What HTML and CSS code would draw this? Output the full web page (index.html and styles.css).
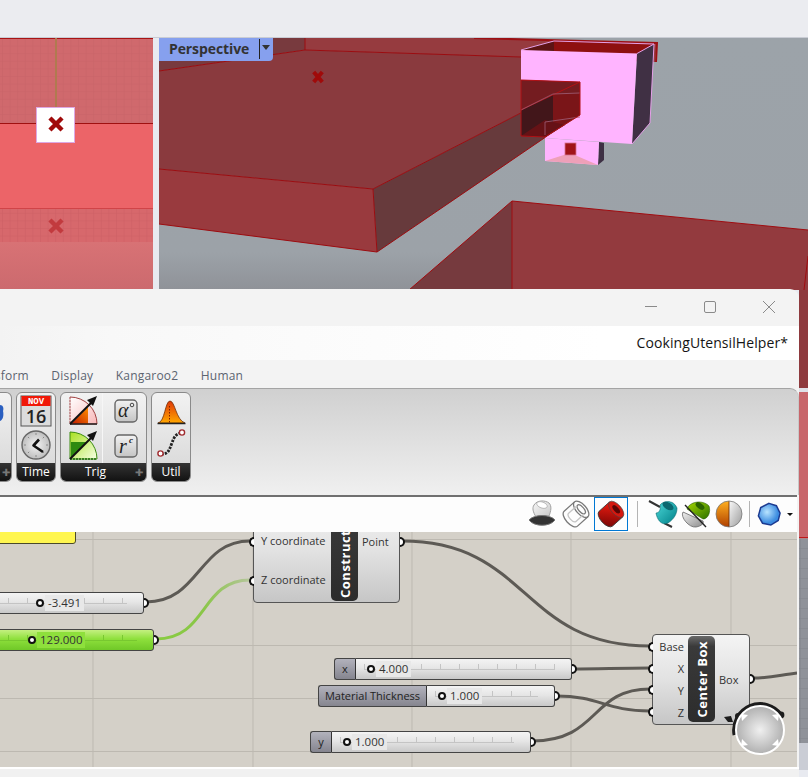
FILE: index.html
```html
<!DOCTYPE html>
<html lang="en">
<head>
<meta charset="utf-8">
<title>CookingUtensilHelper</title>
<link rel="stylesheet" href="styles.css">
</head>
<body>
<div class="desktop">
  <div class="topbar"></div>
  <div class="viewports">
    <div class="vp-left">
      <svg class="vp-svg" viewBox="0 38 153 739" width="153" height="739">
        <defs>
          <pattern id="gridA" width="7.6" height="7.6" patternUnits="userSpaceOnUse" x="2" y="38">
            <rect width="7.6" height="7.6" fill="#d0696d"/>
            <path d="M0 0H7.6M0 0V7.6" stroke="#c86368" stroke-width="1"/>
          </pattern>
          <pattern id="gridB" width="7.6" height="7.6" patternUnits="userSpaceOnUse" x="2" y="38">
            <rect width="7.6" height="7.6" fill="#d7686c"/>
            <path d="M0 0H7.6M0 0V7.6" stroke="#cd5f64" stroke-width="1"/>
          </pattern>
          <linearGradient id="fadeL" x1="0" y1="0" x2="0" y2="1">
            <stop offset="0" stop-color="#d87275"/>
            <stop offset="1" stop-color="#cc6a6e"/>
          </linearGradient>
        </defs>
        <rect x="0" y="38" width="153" height="85" fill="url(#gridA)"/>
        <rect x="0" y="123" width="153" height="85" fill="#ec6468"/>
        <rect x="0" y="208" width="153" height="34" fill="url(#gridB)"/>
        <rect x="0" y="242" width="153" height="47" fill="url(#fadeL)"/>
        <path d="M0 38.5H153" stroke="#a81414" stroke-width="1"/>
        <path d="M56 38V107" stroke="#b07a50" stroke-width="2"/>
        <path d="M0 123.5H153" stroke="#a01010" stroke-width="1"/>
        <path d="M0 208.5H153" stroke="#d04448" stroke-width="1"/>
        <rect x="36.5" y="107.5" width="38" height="35" fill="#fff" stroke="#dca8e4" stroke-width="1"/>
        <path d="M51.5 119.5L60.5 128.5M60.5 119.5L51.5 128.5" stroke="#a00a0a" stroke-width="4.4" stroke-linecap="square" fill="none"/>
        <path d="M51.5 221.5L60.5 230.5M60.5 221.5L51.5 230.5" stroke="#c23a3e" stroke-width="4.4" stroke-linecap="square" fill="none"/>
      </svg>
    </div>
    <div class="vp-right">
      <svg class="vp-svg" viewBox="159 38 649 739" width="649" height="739">
        <defs>
          <linearGradient id="floor" x1="0" y1="0" x2="0" y2="1">
            <stop offset="0" stop-color="#9ca3a9"/>
            <stop offset="0.85" stop-color="#9ca2a8"/>
            <stop offset="1" stop-color="#8f9298"/>
          </linearGradient>
          <pattern id="gridC" width="10" height="10" patternUnits="userSpaceOnUse" x="800" y="538">
            <rect width="10" height="10" fill="#8f9299"/>
            <path d="M0 0H10M0 0V10" stroke="#82858c" stroke-width="1"/>
          </pattern>
        </defs>
        <rect x="159" y="38" width="649" height="252" fill="url(#floor)"/>
        <polygon points="159,38 305,38 305,50 159,71" fill="#783a3e"/>
        <polygon points="305,38 474,38 657,43 655,62 521,57 305,50" fill="#963b3f"/>
        <polygon points="159,71 305,50 560,58 581,82 373,189 159,169" fill="#8a3a3e"/>
        <polygon points="159,169 373,189 377,252 159,224" fill="#993a3e"/>
        <polygon points="373,189 581,82 581,113 377,252" fill="#673a3c"/>
        <path d="M159 71L305 50L521 57M305 38V50M159 169L373 189L377 252L159 224M373 189L581 82M377 252L581 113" fill="none" stroke="#9c0c10" stroke-width="1"/>
        <path d="M474 38L657 43L656 62" fill="none" stroke="#9c1014" stroke-width="2"/>
        <polygon points="512,201 808,230 808,290 512,290" fill="#933a3e"/>
        <polygon points="512,201 512,290 409,290" fill="#763a3e"/>
        <path d="M409 290L512 201L808 230M512 201V290M808 256L804 290" fill="none" stroke="#a00c10" stroke-width="1"/>

        <polygon points="521,50 554,41 554,52" fill="#5c1414"/>
        <polygon points="554,41 654,44 637,53.5 554,52" fill="#8e1010"/>
        <polygon points="637,53.5 654,44 650,123 632,144" fill="#403044"/>
        <polygon points="521,50 637,53.5 632,144 545,138 580,115 580,82 521,80" fill="#ffb4ff"/>
        <path d="M521 50L554 41L654 44L637 53.5M654 44L650 123L632 144" fill="none" stroke="#e4a0e8" stroke-width="1"/>
        <polygon points="521,80 580,82 580,115 545,137 521,136" fill="#741c20"/>
        <polygon points="521,110 553,94 553,130 545,137 521,136" fill="#42161a"/>
        <polygon points="553,94 580,93 580,115 553,130" fill="#7a1518"/>
        <polygon points="521,136 545,137 565,125 545,120" fill="#661216"/>
        <path d="M521 110L580 82" stroke="#b41014" stroke-width="1"/>
        <path d="M521 110L553 94L580 93M545 122L580 117M545 122V135" fill="none" stroke="#a06078" stroke-width="0.8"/>
        <path d="M521 80L580 82L580 115L545 137L521 136Z" fill="none" stroke="#b01014" stroke-width="1"/>

        <polygon points="599,142 604,143 604,160 598,165" fill="#3e3044"/>
        <polygon points="545,138 599,142 598,165 545,161" fill="#ffb4ff"/>
        <path d="M570 153L545 161L598 165Z" fill="#eea0b8"/>
        <rect x="565" y="143" width="11" height="12" fill="#a01418" stroke="#d87090" stroke-width="0.8"/>
        <path d="M315 73.5L321 80.5M321 73.5L315 80.5" stroke="#a00a0a" stroke-width="4" stroke-linecap="square" fill="none"/>

        <rect x="799" y="290" width="9" height="98" fill="#8e3a3e"/>
        <rect x="799" y="388" width="9" height="4" fill="#dfe1e8"/>
        <rect x="799" y="392" width="9" height="145" fill="#c8666b"/>
        <rect x="799" y="537" width="9" height="1.5" fill="#c01818"/>
        <rect x="799" y="538.5" width="9" height="205" fill="url(#gridC)"/>
        <rect x="799" y="743" width="9" height="27" fill="#cacdd5"/>
      </svg>
      <div class="persp-tab">
        <span class="persp-label">Perspective</span>
        <span class="persp-sep"></span>
        <span class="persp-arrow"></span>
      </div>
    </div>
  </div>

  <div class="window">
    <div class="titlebar">
      <svg class="winbtn" width="14" height="14" viewBox="0 0 14 14"><path d="M1 6.5H13" stroke="#8a8a8a" stroke-width="1"/></svg>
      <svg class="winbtn" width="14" height="14" viewBox="0 0 14 14"><rect x="1.5" y="1.5" width="11" height="11" rx="1.5" fill="none" stroke="#8a8a8a" stroke-width="1"/></svg>
      <svg class="winbtn" width="14" height="14" viewBox="0 0 14 14"><path d="M1 1L13 13M13 1L1 13" stroke="#8a8a8a" stroke-width="1"/></svg>
    </div>
    <div class="docrow">CookingUtensilHelper*</div>
    <div class="menurow">
      <span class="menu-item menu-clipped">Transform</span>
      <span class="menu-item">Display</span>
      <span class="menu-item">Kangaroo2</span>
      <span class="menu-item">Human</span>
    </div>

    <div class="ribbon">
      <div class="group group-cut">
        <div class="group-body">
          <svg class="cut-icon" width="4" height="20" viewBox="0 0 4 20"><path d="M0 2C3 2 4 5 3 8C4 12 3 17 0 18Z" fill="#2a5fc0"/></svg>
        </div>
        <div class="group-foot"><span class="foot-plus">✚</span></div>
      </div>
      <div class="group group-time">
        <div class="group-body col">
          <svg width="32" height="32" viewBox="0 0 32 32">
            <rect x="1" y="1" width="30" height="30" fill="#dcdcdc" stroke="#555" stroke-width="1"/>
            <rect x="1.5" y="1" width="29" height="10" fill="#f01808"/>
            <text x="16" y="9" class="cal-month">NOV</text>
            <text x="16" y="28" class="cal-day">16</text>
          </svg>
          <svg width="32" height="32" viewBox="0 0 32 32">
            <defs><radialGradient id="clk"><stop offset="0" stop-color="#f4f4f4"/><stop offset="1" stop-color="#bdbdbd"/></radialGradient></defs>
            <circle cx="16" cy="16" r="14" fill="url(#clk)" stroke="#666" stroke-width="1.4"/>
            <path d="M16 4V6M16 26V28M4 16H6M26 16H28M8 8L9.2 9.2M24 8L22.8 9.2M8 24L9.2 22.8M24 24L22.8 22.8" stroke="#888" stroke-width="1"/>
            <path d="M19 10.5L13.5 16.5L23 23" fill="none" stroke="#111" stroke-width="2.6" stroke-linejoin="round"/>
          </svg>
        </div>
        <div class="group-foot">Time</div>
      </div>
      <div class="group group-trig">
        <div class="group-body trig-grid">
          <svg width="30" height="32" viewBox="0 0 30 32">
            <defs>
              <linearGradient id="pinkS" x1="0" y1="0" x2="1" y2="1"><stop offset="0" stop-color="#fff"/><stop offset="1" stop-color="#f8b8b8"/></linearGradient>
              <linearGradient id="orT" x1="0" y1="1" x2="1" y2="0"><stop offset="0" stop-color="#c01800"/><stop offset="1" stop-color="#ff9000"/></linearGradient>
            </defs>
            <path d="M2 29V2A27 27 0 0 1 29 29Z" fill="url(#pinkS)" stroke="#a04040" stroke-width="1"/>
            <path d="M2 29V2" stroke="#fff" stroke-dasharray="1 2" stroke-width="1"/>
            <path d="M3 29L20 12V29Z" fill="url(#orT)"/>
            <path d="M2 29H29" stroke="#222" stroke-width="1.4"/>
            <path d="M2 29L24 7" stroke="#111" stroke-width="2"/>
            <path d="M29 1L19 5L25 11Z" fill="#111"/>
          </svg>
          <svg width="24" height="24" viewBox="0 0 24 24">
            <defs><linearGradient id="btn" x1="0" y1="0" x2="0" y2="1"><stop offset="0" stop-color="#f2f2f2"/><stop offset="1" stop-color="#c4c4c4"/></linearGradient></defs>
            <rect x="1" y="1" width="22" height="22" rx="4" fill="url(#btn)" stroke="#666" stroke-width="1.4"/>
            <text x="4" y="17.5" class="math-big">α</text>
            <circle cx="18" cy="6" r="1.8" fill="none" stroke="#333" stroke-width="0.9"/>
          </svg>
          <svg width="30" height="32" viewBox="0 0 30 32">
            <defs>
              <linearGradient id="grS" x1="0" y1="0" x2="1" y2="1"><stop offset="0" stop-color="#a8e020"/><stop offset="1" stop-color="#f6ffe4"/></linearGradient>
            </defs>
            <path d="M2 29V2A27 27 0 0 1 29 29Z" fill="url(#grS)" stroke="#3c8c10" stroke-width="1"/>
            <path d="M3 12H19L3 28Z" fill="#2e8a10"/>
            <path d="M2 29H29" stroke="#1c6a08" stroke-dasharray="2 1" stroke-width="1.4"/>
            <path d="M2 29L24 7" stroke="#111" stroke-width="2"/>
            <path d="M29 1L19 5L25 11Z" fill="#111"/>
          </svg>
          <svg width="24" height="24" viewBox="0 0 24 24">
            <rect x="1" y="1" width="22" height="22" rx="4" fill="url(#btn)" stroke="#666" stroke-width="1.4"/>
            <text x="5" y="18.5" class="math-big">r</text>
            <text x="15" y="9" class="math-small">c</text>
          </svg>
        </div>
        <div class="group-foot foot-trig">Trig<span class="foot-plus foot-right">✚</span></div>
      </div>
      <div class="group group-util">
        <div class="group-body col">
          <svg width="30" height="28" viewBox="0 0 30 28">
            <defs><linearGradient id="dist" x1="0" y1="0" x2="0" y2="1"><stop offset="0" stop-color="#e03808"/><stop offset="1" stop-color="#ffa800"/></linearGradient></defs>
            <path d="M2 25C9 24 9 3 14 3C19 3 20 22 29 25Z" fill="url(#dist)" stroke="#703008" stroke-width="0.8"/>
            <path d="M1.5 25.5H29.5" stroke="#222" stroke-width="1.4"/>
            <path d="M13.5 8V25" stroke="#802000" stroke-dasharray="1.5 1.5"/>
          </svg>
          <svg width="30" height="30" viewBox="0 0 30 30">
            <path d="M5 26C13 26 13 22 16 15C18 9 20 6 25 5" fill="none" stroke="#222" stroke-width="2.8" stroke-dasharray="2.4 1.2"/>
            <circle cx="4.5" cy="25.5" r="2.6" fill="#fff" stroke="#a02c30" stroke-width="1.4"/>
            <circle cx="26" cy="4.5" r="2.6" fill="#fff" stroke="#a02c30" stroke-width="1.4"/>
          </svg>
        </div>
        <div class="group-foot">Util</div>
      </div>
    </div>

    <div class="toolbar">
      <svg class="t-ghost" width="30" height="30" viewBox="0 0 30 30">
        <defs>
          <linearGradient id="ghost" x1="0" y1="0" x2="1" y2="1"><stop offset="0" stop-color="#f8f8f8"/><stop offset="1" stop-color="#c8c8c8"/></linearGradient>
        </defs>
        <path d="M7 6C10 1 18 1 22 4C25 7 24 12 22 17L9 18C6 13 5 9 7 6Z" fill="url(#ghost)" stroke="#a0a0a0" stroke-width="1"/>
        <ellipse cx="15" cy="6" rx="5.5" ry="3" fill="#fff" stroke="#b0b0b0" stroke-width="0.8" transform="rotate(20 15 6)"/>
        <path d="M2 21C7 15 23 15 28 21C23 28 7 28 2 21Z" fill="#333" stroke="#777" stroke-width="1"/>
      </svg>
      <svg class="t-wire" width="30" height="30" viewBox="0 0 30 30">
        <g transform="rotate(48 15 15)" fill="none" stroke="#7a7a7a" stroke-width="1.3">
          <path d="M5 8V22A10 5 0 0 0 25 22V8"/>
          <ellipse cx="15" cy="8" rx="10" ry="5"/>
          <ellipse cx="15" cy="8" rx="5.5" ry="2.6"/>
          <path d="M9.5 9V20A5.5 2.6 0 0 0 20.5 20V9" stroke="#c4c4c4"/>
        </g>
      </svg>
      <div class="tool-selected">
        <svg width="30" height="30" viewBox="0 0 30 30">
          <defs>
            <linearGradient id="red" x1="0" y1="0" x2="1" y2="1"><stop offset="0" stop-color="#ee1c10"/><stop offset="1" stop-color="#700404"/></linearGradient>
          </defs>
          <g transform="rotate(48 15 15)">
            <path d="M5 8V22A10 5 0 0 0 25 22V8Z" fill="url(#red)" stroke="#333" stroke-width="0.8"/>
            <ellipse cx="15" cy="8" rx="10" ry="5" fill="#d41810" stroke="#444" stroke-width="0.6"/>
            <ellipse cx="15" cy="8" rx="5" ry="2.4" fill="#5a0606"/>
          </g>
        </svg>
      </div>
      <span class="tool-sep sep-a"></span>
      <svg class="t-teal" width="32" height="30" viewBox="0 0 32 30">
        <defs><linearGradient id="teal" x1="0" y1="0" x2="1" y2="1"><stop offset="0" stop-color="#4cd8d8"/><stop offset="1" stop-color="#008088"/></linearGradient></defs>
        <path d="M3 2L14 8M18 24L26 28" stroke="#333" stroke-width="2"/>
        <path d="M14 6C18 1 28 1 31 9C31 15 28 20 22 24C15 27 11 20 10 14C14 14 15 9 14 6Z" fill="url(#teal)" stroke="#0c6a70" stroke-width="0.6"/>
        <ellipse cx="22" cy="7" rx="6" ry="3.4" fill="#0a6870" transform="rotate(30 22 7)"/>
      </svg>
      <svg class="t-green" width="30" height="30" viewBox="0 0 30 30">
        <defs>
          <linearGradient id="grn" x1="0" y1="0" x2="1" y2="1"><stop offset="0" stop-color="#a4d800"/><stop offset="1" stop-color="#2c7000"/></linearGradient>
          <linearGradient id="wht" x1="0" y1="0" x2="1" y2="1"><stop offset="0" stop-color="#f0f0f0"/><stop offset="1" stop-color="#8c8c8c"/></linearGradient>
        </defs>
        <path d="M2 13C-1 18 8 29 15 28C21 27 23 24 22 22Z" fill="url(#wht)" stroke="#666" stroke-width="0.8"/>
        <path d="M6 10C8 3 21 0 28 7C30 13 27 20 22 20Z" fill="url(#grn)" stroke="#2a6000" stroke-width="0.6"/>
        <ellipse cx="19" cy="7" rx="5" ry="2.8" fill="#2c6400" transform="rotate(35 19 7)"/>
        <path d="M4 6L25 28" stroke="#222" stroke-width="1.4"/>
      </svg>
      <svg class="t-sphere" width="28" height="28" viewBox="0 0 28 28">
        <defs>
          <linearGradient id="orng" x1="0" y1="0" x2="0" y2="1"><stop offset="0" stop-color="#ffb020"/><stop offset="1" stop-color="#b04000"/></linearGradient>
          <linearGradient id="ws" x1="0" y1="0" x2="1" y2="1"><stop offset="0" stop-color="#fafafa"/><stop offset="1" stop-color="#9a9a9a"/></linearGradient>
        </defs>
        <path d="M14 1A13 13 0 0 0 14 27Z" fill="url(#orng)"/>
        <path d="M14 1A13 13 0 0 1 14 27Z" fill="url(#ws)"/>
        <path d="M14 1V27" stroke="#6a2800" stroke-width="0.8"/>
        <circle cx="14" cy="14" r="13" fill="none" stroke="#777" stroke-width="0.8"/>
      </svg>
      <span class="tool-sep sep-b"></span>
      <svg class="t-hept" width="24" height="24" viewBox="0 0 26 26">
        <defs><radialGradient id="blu" cx="0.4" cy="0.4"><stop offset="0" stop-color="#b8e4ff"/><stop offset="1" stop-color="#3c8ce0"/></radialGradient></defs>
        <polygon points="13,1.5 21,4 25,12 23,20 15,25 6,23 1.5,15 4,6" fill="url(#blu)" stroke="#1c3a90" stroke-width="1.6"/>
      </svg>
      <span class="tool-drop"></span>
    </div>

    <div class="canvas">
      <svg class="wires" viewBox="0 533 797 235" width="797" height="235">
        <defs>
          <linearGradient id="wireGreen" x1="0" y1="0" x2="1" y2="0"><stop offset="0" stop-color="#88cc40"/><stop offset="0.5" stop-color="#8ac648"/><stop offset="1" stop-color="#b4c59a"/></linearGradient>
        </defs>
        <path class="grid-line" d="M93 533V768M253 533V768M412 533V768M571 533V768M731 533V768M0 540.5H797M0 646.5H797M0 699.5H797M0 752.5H797"/>
        <path class="wire" d="M402 542C530 542 520 647 650 647"/>
        <path class="wire" d="M146 603C200 603 198 542 250 542"/>
        <path class="wire-green" d="M156 640C208 640 200 581 250 581"/>
        <path class="wire" d="M573 670C600 670 620 669 650 669"/>
        <path class="wire" d="M556 697C600 697 605 712 650 712"/>
        <path class="wire" d="M532 742C600 742 590 690 650 690"/>
        <path class="wire" d="M753 679C770 679 780 676 797 674"/>
      </svg>

      <div class="yellow-panel"></div>

      <div class="slider slider-neg">
        <div class="slider-body">
          <div class="track"></div>
          <span class="grip"></span><span class="val">-3.491</span>
        </div>
        <span class="port port-out"></span>
      </div>
      <div class="slider slider-green">
        <div class="slider-body body-green">
          <div class="track track-green"></div>
          <span class="grip"></span><span class="val val-green">129.000</span>
        </div>
        <span class="port port-out"></span>
      </div>
      <div class="slider slider-x">
        <div class="slider-label label-x">x</div>
        <div class="slider-body">
          <div class="track"></div>
          <span class="grip"></span><span class="val">4.000</span>
        </div>
        <span class="port port-out"></span>
      </div>
      <div class="slider slider-mt">
        <div class="slider-label label-mt">Material Thickness</div>
        <div class="slider-body">
          <div class="track"></div>
          <span class="grip"></span><span class="val">1.000</span>
        </div>
        <span class="port port-out"></span>
      </div>
      <div class="slider slider-y">
        <div class="slider-label label-x">y</div>
        <div class="slider-body">
          <div class="track"></div>
          <span class="grip"></span><span class="val">1.000</span>
        </div>
        <span class="port port-out"></span>
      </div>

      <div class="comp comp-point">
        <span class="io in-y">Y coordinate</span>
        <span class="io in-z">Z coordinate</span>
        <div class="strip strip-point"><span>Construct Point</span></div>
        <span class="io out-point">Point</span>
        <span class="port port-in pin-y"></span>
        <span class="port port-in pin-z"></span>
        <span class="port port-out pout-point"></span>
      </div>

      <div class="comp comp-box">
        <div class="box-inputs">
          <span class="io-flow">Base</span>
          <span class="io-flow">X</span>
          <span class="io-flow">Y</span>
          <span class="io-flow">Z</span>
        </div>
        <div class="strip strip-box"><span>Center Box</span></div>
        <span class="io-flow box-out">Box</span>
        <span class="port port-in pin-base"></span>
        <span class="port port-in pin-x"></span>
        <span class="port port-in pin-by"></span>
        <span class="port port-in pin-bz"></span>
        <span class="port port-out pout-box"></span>
      </div>

      <svg class="wheel" width="72" height="64" viewBox="-7 0 72 64">
        <defs><radialGradient id="whl"><stop offset="0" stop-color="#f0f0f0"/><stop offset="1" stop-color="#b0b0b0"/></radialGradient></defs>
        <path d="M-3 22L4 21L6 27L1 27Z" fill="#1c1c1c"/>
        <path d="M7.6 40A26 26 0 0 1 54.3 20" fill="none" stroke="#1c1c1c" stroke-width="4"/>
        <circle cx="54" cy="20" r="3.4" fill="#1c1c1c"/>
        <circle cx="11" cy="21" r="3" fill="#1c1c1c"/>
        <circle cx="33" cy="35" r="24" fill="url(#whl)" stroke="#fff" stroke-width="2"/>
        <path d="M14 19L21 20L15 26Z M52 19L45 20L51 26Z M14 51L21 50L15 44Z M52 51L45 50L51 44Z" fill="#fff"/>
      </svg>
    </div>
    <div class="window-foot"></div>
  </div>
</div>
</body>
</html>
```
FILE: styles.css
```css
* { box-sizing: border-box; }
html, body { margin: 0; padding: 0; }
body { width: 808px; height: 777px; overflow: hidden; background: #ebecf0; font-family: "Open Sans", "Liberation Sans", sans-serif; }

.desktop { position: relative; width: 808px; height: 777px; overflow: hidden; display: flex; flex-direction: column; }
.topbar { height: 38px; flex: none; background: #ebecf0; border-bottom: 1px solid #c9ccd4; }
.viewports { flex: 1; display: flex; min-height: 0; background: #e8eaf0; }
.vp-left { width: 153px; flex: none; }
.vp-right { position: relative; width: 649px; margin-left: 6px; flex: none; }
.vp-svg { display: block; }

.persp-tab { position: absolute; left: 0; top: 0; width: 114px; height: 23px; background: #86a0ee; display: flex; align-items: center; padding: 0 0 2px 10px; border-bottom-right-radius: 4px; }
.persp-label { font-size: 14px; font-weight: 700; color: #333; width: 90px; letter-spacing: -0.1px; }
.persp-sep { width: 1px; height: 20px; background: #222; flex: none; }
.persp-arrow { margin-left: 2px; width: 0; height: 0; border-left: 4.5px solid transparent; border-right: 4.5px solid transparent; border-top: 5px solid #333; margin-top: -3px; }

.window { position: absolute; left: 0; top: 289px; width: 799px; height: 488px; background: #f3f3f3; border-top-right-radius: 9px; display: flex; flex-direction: column; overflow: hidden; }
.titlebar { height: 37px; flex: none; display: flex; justify-content: flex-end; align-items: center; gap: 45px; padding: 0 23px 2px 0; }
.docrow { height: 34px; flex: none; background: linear-gradient(to right, #f3f3f3 0, #f8f8f8 110px, #fbfbfb 300px, #fff 600px); text-align: right; padding-right: 11px; font-size: 14px; line-height: 34px; color: #141414; letter-spacing: 0.08px; }
.menurow { height: 28px; flex: none; display: flex; align-items: center; gap: 22.5px; overflow: hidden; padding-top: 2px; }
.menu-item { font-size: 12px; letter-spacing: 0.2px; color: #5c6470; flex: none; }
.menu-clipped { margin-left: -31.5px; }

.ribbon { height: 107px; flex: none; display: flex; gap: 4px; padding-top: 3px; background: linear-gradient(#d0d0d0, #f0f0f0); border-top: 1px solid #a4a4a4; border-top-right-radius: 9px; border-right: 1px solid #c8c8c8; }
.group { height: 90px; display: flex; flex-direction: column; border: 1px solid #8a8a8a; border-radius: 6px; overflow: hidden; flex: none; background: linear-gradient(#f2f2f2, #d6d6d6); }
.group-cut { width: 12px; border-left: 0; border-top-left-radius: 0; border-bottom-left-radius: 0; }
.group-time { width: 40px; }
.group-trig { width: 87px; }
.group-util { width: 40px; }
.group-body { flex: 1; min-height: 0; position: relative; }
.group-body.col { display: flex; flex-direction: column; align-items: center; justify-content: center; gap: 2px; }
.cut-icon { position: absolute; left: 0; top: 10px; }
.group-foot { height: 18px; flex: none; position: relative; background: linear-gradient(#343434, #121212); color: #fff; font-size: 12px; line-height: 18px; text-align: center; }
.foot-trig { padding-right: 16px; }
.foot-plus { color: #777; font-size: 10px; }
.foot-right { position: absolute; right: 3px; top: 0; }
.trig-grid { display: grid; grid-template-columns: 42px 44px; grid-template-rows: 35.5px 35.5px; justify-items: center; align-items: center; padding: 0 0 0 1px; background: linear-gradient(to right, transparent 41px, #f6f6f6 41px, #f6f6f6 42px, transparent 42px); }
.cal-month { font: 700 9px "Liberation Mono", monospace; fill: #fff; text-anchor: middle; }
.cal-day { font: 600 18px "Open Sans", sans-serif; fill: #222; text-anchor: middle; }
.math-big { font: italic 400 20px "Liberation Serif", serif; fill: #222; }
.math-small { font: italic 700 9px "Liberation Serif", serif; fill: #222; }

.toolbar { height: 37px; flex: none; background: #fdfdfd; border-top: 2px solid #707070; display: flex; align-items: center; justify-content: flex-end; padding: 0 4px 1px 0; margin-right: 2px; }
.toolbar > svg { flex: none; }
.t-wire { margin-left: 4px; }
.tool-selected { width: 34px; height: 34px; margin-left: 3px; border: 1px solid #0078d4; display: flex; align-items: center; justify-content: center; flex: none; }
.tool-sep { width: 1px; height: 26px; background: #b4b4b4; flex: none; }
.sep-a { margin: 0 8px 0 9px; }
.sep-b { margin: 0 7px 0 6px; }
.t-green { margin-left: 3px; }
.t-sphere { margin-left: 4px; }
.tool-drop { width: 0; height: 0; border-left: 3px solid transparent; border-right: 3px solid transparent; border-top: 3px solid #111; margin-left: 6px; flex: none; }

.canvas { position: relative; height: 235px; width: 797px; flex: none; overflow: hidden; background: #d4d0c8; }
.wires { position: absolute; left: 0; top: 0; }
.grid-line { fill: none; stroke: #bdb9b1; stroke-width: 1; }
.wire { fill: none; stroke: #5d5a55; stroke-width: 3; }
.wire-green { fill: none; stroke: url(#wireGreen); stroke-width: 3; }

.yellow-panel { position: absolute; left: -10px; top: -20px; width: 86px; height: 32px; background: #fff650; border: 1px solid #4a4a2a; border-radius: 0 0 3px 3px; }

.slider { position: absolute; height: 22px; display: flex; color: #333; font-size: 11px; }
.slider-neg { left: -20px; top: 60px; width: 164px; }
.slider-green { left: -20px; top: 97px; width: 174px; }
.slider-x { left: 334px; top: 126px; width: 238px; }
.slider-mt { left: 318px; top: 153px; width: 237px; }
.slider-y { left: 310px; top: 199px; width: 221px; }
.slider-label { flex: none; height: 100%; background: linear-gradient(#b2b2bc, #85858f); border: 1px solid #444; border-right: 1px solid #333; border-radius: 3px 0 0 3px; text-align: center; line-height: 19px; color: #222; }
.label-x { width: 22px; }
.label-mt { width: 109px; }
.slider-body { position: relative; flex: 1; height: 100%; display: flex; align-items: center; padding-left: 11px; background: linear-gradient(#f4f4f4 0, #e6e6e6 45%, #c8c8c8 100%); border: 1px solid #444; border-left: 0; border-radius: 0 3px 3px 0; }
.slider-neg .slider-body, .slider-green .slider-body { border-left: 1px solid #444; padding-left: 55px; }
.slider-green .slider-body { padding-left: 47px; }
.body-green { background: linear-gradient(#c4f080 0, #8ee03c 45%, #70c828 100%); }
.track { position: absolute; left: 8px; right: 16px; top: 5px; height: 6px; border-bottom: 1px solid #c4c4c4; background: repeating-linear-gradient(to right, #c4c4c4 0 1px, transparent 1px 19px); }
.track-green { border-color: #78c830; background: repeating-linear-gradient(to right, #78c830 0 1px, transparent 1px 19px); }
.grip { position: relative; width: 8px; height: 8px; border: 2.4px solid #111; border-radius: 50%; background: #fff; flex: none; }
.val { position: relative; margin-left: 1px; padding: 2px 3px 3px 3px; line-height: 1; font-size: 11.5px; background: #e8e8e8; }
.val-green { background: #8ee03c; }

.port { position: absolute; width: 5px; height: 10px; background: #fff; border: 2px solid #111; }
.port-in { border-right: 0; border-radius: 5px 0 0 5px; left: -5px; }
.port-out { border-left: 0; border-radius: 0 5px 5px 0; }
.slider > .port-out { right: -5px; top: 6px; }

.comp { position: absolute; background: linear-gradient(#f4f4f4 0, #e2e2e2 50%, #c6c6c6 100%); border: 1px solid #555; border-radius: 4px; color: #333; font-size: 11px; }
.comp-point { left: 253px; top: -33px; width: 147px; height: 104px; }
.comp-box { left: 652px; top: 102px; width: 98px; height: 91px; display: flex; }
.io { position: absolute; white-space: nowrap; line-height: 14px; }
.in-y { left: 7px; top: 34px; }
.in-z { left: 7px; top: 73px; }
.out-point { left: 108px; top: 35px; }
.strip { background: linear-gradient(#6a6a6a 0, #3a3a3a 12%, #2c2c2c 100%); border-radius: 5px; color: #fff; font-weight: 700; font-size: 13px; letter-spacing: 0.5px; display: flex; align-items: center; overflow: hidden; }
.strip span { writing-mode: vertical-rl; transform: rotate(180deg); white-space: nowrap; }
.strip-point { position: absolute; left: 77px; top: 0; bottom: 1px; width: 27px; justify-content: center; align-items: flex-end; padding-bottom: 3px; }
.strip-box { width: 27px; height: 86px; flex: none; margin: 1px 0 0 0; justify-content: center; }
.box-inputs { width: 35px; padding: 2px 4px 2px 0; display: flex; flex-direction: column; align-items: flex-end; justify-content: space-between; flex: none; }
.io-flow { line-height: 19px; height: 19px; }
.box-out { align-self: center; margin-left: 4px; }
.pin-y { top: 37px; }
.pin-z { top: 76px; }
.pout-point { right: -6px; top: 37px; }
.pin-base { top: 7px; }
.pin-x { top: 29px; }
.pin-by { top: 50px; }
.pin-bz { top: 72px; }
.pout-box { right: -6px; top: 39px; }
.wheel { position: absolute; left: 720px; top: 163px; }

.window-foot { flex: 1; background: #f1f1f1; border-top: 2px solid #fff; }
```
